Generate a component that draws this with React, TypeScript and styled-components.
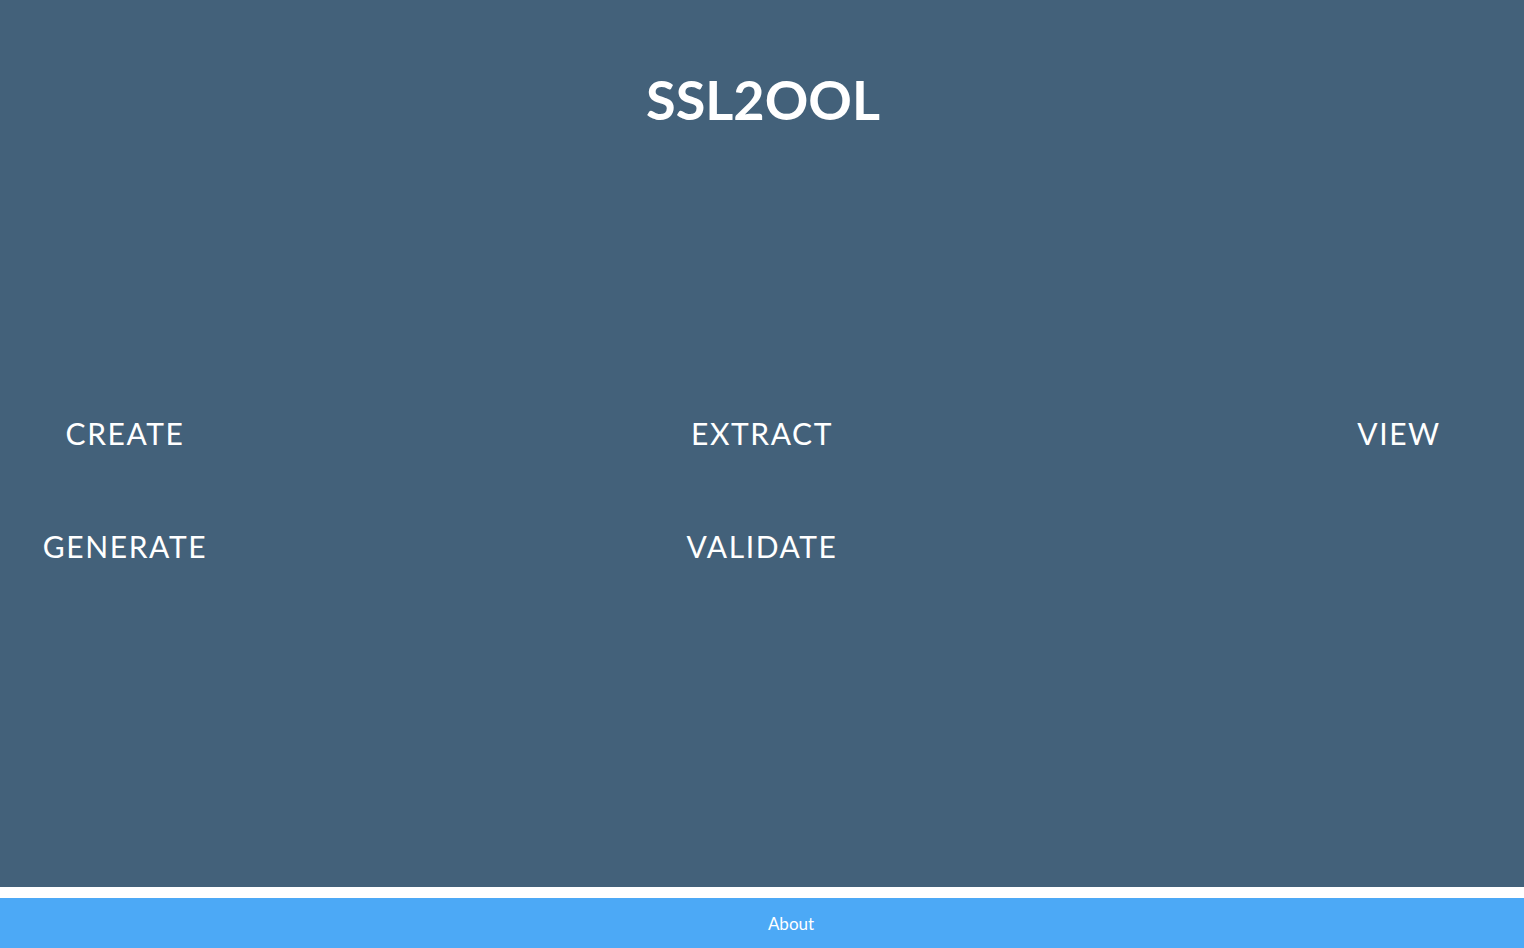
import styled, { createGlobalStyle } from 'styled-components';

const GlobalStyle = createGlobalStyle`
  html, body {
    margin: 0;
    padding: 0;
    background: #fff;
  }
  body {
    font-family: Lato, "Open Sans", "Liberation Sans", sans-serif;
  }
`;

const Page = styled.div`
  display: flex;
  flex-direction: column;
  height: 948px;
`;

const Main = styled.main`
  display: flex;
  flex-direction: column;
  height: 887px;
  background-color: #43617a;
  color: #fff;
`;

const Title = styled.h1`
  margin: 66px 0 0 2px;
  font-size: 54px;
  line-height: 68px;
  font-weight: 700;
  letter-spacing: 0;
  text-align: center;
`;

const Grid = styled.div`
  display: flex;
  flex-direction: column;
  gap: 79px;
  margin-top: 282px;
`;

const Row = styled.div`
  display: flex;
  justify-content: space-between;
`;

const Tool = styled.a`
  display: block;
  width: 250px;
  font-size: 30px;
  line-height: 34px;
  letter-spacing: 1.6px;
  text-align: center;
  color: #fff;
  text-decoration: none;
  cursor: pointer;
`;

const Slot = styled.div`
  width: 250px;
`;

const Footer = styled.footer`
  margin-top: 11px;
  height: 50px;
  display: flex;
  align-items: center;
  justify-content: center;
  padding-left: 58px;
  background-color: #4ca9f6;
`;

const FooterLink = styled.a`
  color: #fff;
  font-size: 17px;
  text-decoration: none;
`;

const App = () => (
  <>
    <GlobalStyle />
    <Page>
      <Main>
        <Title>SSL2OOL</Title>
        <Grid>
          <Row>
            <Tool>CREATE</Tool>
            <Tool>EXTRACT</Tool>
            <Tool>VIEW</Tool>
          </Row>
          <Row>
            <Tool>GENERATE</Tool>
            <Tool>VALIDATE</Tool>
            <Slot />
          </Row>
        </Grid>
      </Main>
      <Footer>
        <FooterLink>About</FooterLink>
      </Footer>
    </Page>
  </>
);

export default App;
